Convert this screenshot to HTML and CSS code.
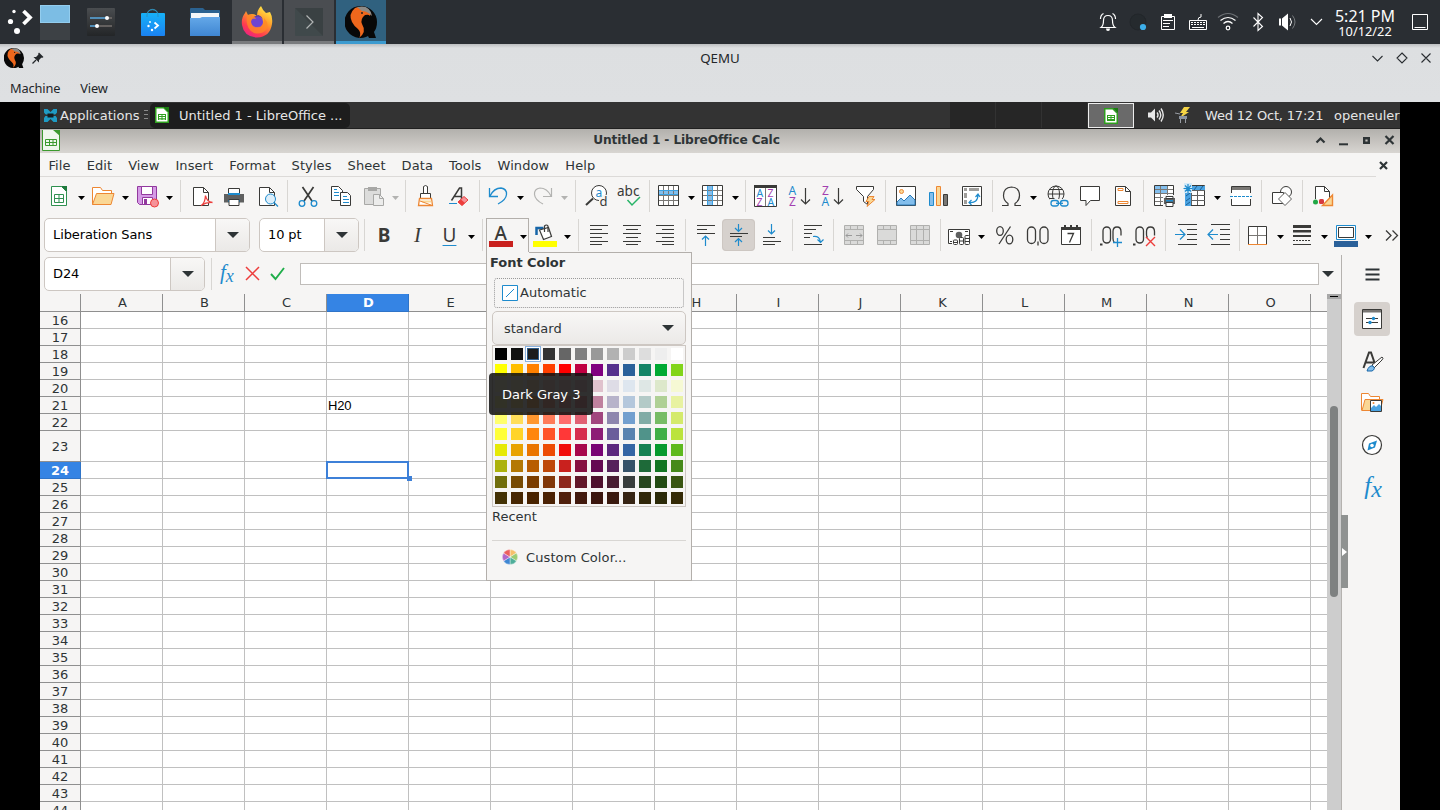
FILE: index.html
```html
<!DOCTYPE html>
<html lang="en">
<head>
<meta charset="utf-8">
<title>QEMU</title>
<link rel="stylesheet" href="styles.css">
</head>
<body>
<div class="screen">

<header class="panel">
  <div class="launcher"><svg width="40" height="44"><g fill="#fff"><circle cx="14" cy="11.500" r="1.700"/><circle cx="10.500" cy="21.500" r="2.600"/><circle cx="17" cy="31" r="3"/></g><path d="M23.500 11l6.500 6.500-6.500 6.500" fill="none" stroke="#fff" stroke-width="3.800"/></svg></div>
  <div class="pager"><i></i><i></i></div>
  <div class="launch"><svg width="28" height="28"><defs><linearGradient id="gs" x1="0" y1="0" x2="0" y2="1"><stop offset="0" stop-color="#4a4d50"/><stop offset="1" stop-color="#232527"/></linearGradient></defs><rect width="28" height="28" rx="1" fill="url(#gs)"/><path d="M3 10h17M3 18h6" stroke="#5aa9e0" stroke-width="1.500"/><path d="M21 10h4M11 18h14" stroke="#75706e" stroke-width="1.500"/><circle cx="20" cy="10" r="2" fill="#fff"/><circle cx="10" cy="18" r="2" fill="#fff"/></svg></div>
  <div class="launch"><svg width="28" height="28"><defs><linearGradient id="gd" x1="0" y1="0" x2="0" y2="1"><stop offset="0" stop-color="#16b1f7"/><stop offset="1" stop-color="#1b82f2"/></linearGradient></defs><path d="M8 10V7a5.500 5.500 0 0 1 11 0v3" fill="none" stroke="#3f6f7c" stroke-width="1.300"/><rect x="2" y="5" width="24" height="23" rx="1" fill="url(#gd)"/><path d="M8 9V7a5.500 5.500 0 0 1 11 0v2" fill="none" stroke="#2b8fc0"/><g fill="#fff"><circle cx="11" cy="14" r=".9"/><circle cx="9.500" cy="18" r="1.200"/><circle cx="13" cy="22" r="1.200"/></g><path d="M15.500 14.500l3.500 3-3.500 3" fill="none" stroke="#fff" stroke-width="1.800"/></svg></div>
  <div class="launch"><svg width="30" height="28"><defs><linearGradient id="gf" x1="0" y1="0" x2="0" y2="1"><stop offset="0" stop-color="#64a8e8"/><stop offset="1" stop-color="#3f86d2"/></linearGradient></defs><path d="M0 1q0-1 1-1h12l2 2h14q1 0 1 1v9H0z" fill="#2b6290"/><path d="M1 5h28v5H1z" fill="#f4f7f9"/><path d="M0 10h10l2-1h18v19H0z" fill="url(#gf)"/></svg></div>
  <div class="task"><svg width="32" height="32"><defs><linearGradient id="ff" x1=".8" y1="0" x2=".2" y2="1"><stop offset="0" stop-color="#fff04a"/><stop offset=".4" stop-color="#ff9a2a"/><stop offset=".75" stop-color="#ff3a50"/><stop offset="1" stop-color="#e8208c"/></linearGradient></defs><path d="M20 0q2 5 5 7l4-1q3 5 2 12-2 13-15 13.500Q3 31 1 19q-1-7 3-12l1-2 2 4q2-1 4-1 3 0 5 2 0-6 4-10z" fill="url(#ff)"/><circle cx="16" cy="16" r="6" fill="#6e44d0"/><path d="M6 9q7-1 9 4-5-1-5 3 1 5 6 5 8 0 7-9 6 6 2 12-5 5-12 3Q4 23 6 9z" fill="#ff8a24" opacity=".75"/><path d="M13 11q7-2 9 3-1-4-5-5z" fill="#4c36a8"/></svg></div>
  <div class="task"><svg width="28" height="28"><rect width="28" height="28" rx="1" fill="#40494b"/><path d="M0 0l28 28V0z" fill="#3a4143"/><path d="M11.500 7.500l6.500 6.500-6.500 6.500" fill="none" stroke="#b2b5b5" stroke-width="1.200"/></svg></div>
  <div class="task active"><svg width="32" height="32" viewBox="0 0 32 32"><g id="qemu"><path d="M16 0a16 16 0 1 0 5 31l2-1 1 2h7l-2-6q3-4 3-10A16 16 0 0 0 16 0z" fill="#080808"/><path d="M10 2Q3 8 7 16q2 4 6 7 4 4 1 9 8-6 3-14-2-5 3-9 4-1 5 1 2-5-5-8-6-2-10 0z" fill="#ee671c"/><path d="M12 1q13-3 15 9-5-5-10-5z" fill="#8d8a86"/><circle cx="17" cy="7" r="1" fill="#222"/></g></svg></div>
  <div class="tray">
    <svg width="30" height="30"><g fill="none" stroke="#fff" stroke-width="1.200"><path d="M8 20.500q2.500-2 2.500-7 0-5 4.500-5t4.500 5q0 5 2.500 7zM7.500 12q0-4 3-5.500M22.500 12q0-4-3-5.500"/></g><path d="M13 21.500h4q0 2.500-2 2.500t-2-2.500z" fill="#fff"/></svg>
    <svg width="30" height="30"><circle cx="15" cy="15" r="8" fill="#252a2e" stroke="#22262a"/><circle cx="20" cy="20" r="3.100" fill="#3daee9"/></svg>
    <svg width="30" height="30"><path d="M8.500 9.500h13v13h-13z" fill="none" stroke="#fff"/><path d="M11 7h8v4h-8zM10 13h10v1H10zM10 16h7v1h-7zM10 19h6v1h-6z" fill="#fff"/></svg>
    <svg width="30" height="30"><path d="M6.500 13.500h17v9h-17zM15 13q0-3 3-3V7" fill="none" stroke="#fff"/><path d="M8 15.500h14M8 17.500h14" stroke="#fff" stroke-dasharray="2 1"/><path d="M9 20.500h12" stroke="#fff"/></svg>
    <svg width="30" height="30"><g fill="none" stroke="#fff" stroke-width="1.200"><circle cx="15" cy="21" r="1.800"/><path d="M10.500 16.500q4.500-4 9 0M7.500 13.500q7.500-6 15 0"/><path d="M5 10.500q10-8 20 0" stroke="#6c7074"/></g></svg>
    <svg width="30" height="30"><path d="M10.500 10.500l9 9-4.500 4v-17l4.500 4-9 9" fill="none" stroke="#fff" stroke-width="1.100"/></svg>
    <svg width="30" height="30"><path d="M6 11.500h2v7H6zM9 11.500l6-5v17l-6-5z" fill="#fff"/><path d="M17 11q3 4 0 8" fill="none" stroke="#fff"/><path d="M19.500 8.500q5 6.500 0 13" fill="none" stroke="#777b7e"/></svg>
    <svg width="30" height="30"><path d="M8 12l5.500 5.500 5.500-5.500" fill="none" stroke="#fff" stroke-width="1.100"/></svg>
  </div>
  <div class="clock"><b>5:21 PM</b><span>10/12/22</span></div>
  <svg class="desk" width="16" height="16"><path d="M.5.5h15v15H.5z" fill="none" stroke="#fff"/><path d="M2.500 13.500h11" stroke="#fff"/></svg>
</header>

<section class="qemu-head">
  <div class="qtitle">
    <svg class="qicon" width="20" height="20" viewBox="0 0 32 32"><use href="#qemu"/></svg>
    <svg width="12" height="12"><path d="M7 .5L11.500 5 10 6 9.500 5.500 7 8v2.500L1.500 5H4l2.500-2.500L6 2z" fill="#24282b"/><path d="M4 8L.5 11.500" stroke="#24282b" stroke-width="1.200"/></svg>
    <h1>QEMU</h1>
    <svg class="qctl" width="60" height="14"><g fill="none" stroke="#2a2e32" stroke-width="1.100"><path d="M1.500 5l5 5 5-5M31 2l5 5-5 5-5-5zM50.500 2.500l9 9M59.500 2.500l-9 9"/></g></svg>
  </div>
  <nav class="qmenu"><span>Machine</span><span>View</span></nav>
</section>

<main class="guest">
  <div class="xpanel">
    <svg width="15" height="15"><path d="M1 1h3.500l3 3 3-3H14v3.500L12 7l2 3v4h-3.500l-3-3-3 3H1v-4l2-3-2-2.500z" fill="#1f9bc4"/><path d="M0 6.500h15v1.500H0z" fill="#333"/><path d="M4.500 5.500h6v4h-6z" fill="#141c20"/></svg>
    <span class="apps">Applications</span>
    <i class="grip"></i>
    <div class="xtask"><svg width="14" height="16"><path d="M0 0h9l5 5v11H0z" fill="#2ea01e"/><path d="M1.500 1.500h7l4 4v9h-11z" fill="#fff"/><path d="M9 0h5v5z" fill="#197c10"/><path d="M3 7h8v6H3z" fill="#2ea01e"/><path d="M4 8h2.500v1H4zM7.500 8H10v1H7.500zM4 10h2.500v1H4zM7.500 10H10v1H7.500zM4 11.800h2.500v.6H4zM7.500 11.800H10v.6H7.500z" fill="#fff"/></svg><span>Untitled 1 - LibreOffice ...</span></div>
    <div class="spaces"><i></i><i></i><i></i><i class="on"><svg width="14" height="16"><path d="M0 0h9l5 5v11H0z" fill="#2ea01e"/><path d="M1.500 1.500h7l4 4v9h-11z" fill="#fff"/><path d="M9 0h5v5z" fill="#197c10"/><path d="M3 7h8v6H3z" fill="#2ea01e"/><path d="M4 8h2.500v1H4zM7.500 8H10v1H7.500zM4 10h2.500v1H4zM7.500 10H10v1H7.500z" fill="#fff"/></svg></i></div>
    <svg class="vol" width="16" height="14"><path d="M0 4.500h3l4-4v13l-4-4H0z" fill="#e8e8e8"/><path d="M9 4.500q2 2.500 0 5M11 2.500q3.500 4.500 0 9M13 .5q4.500 6.500 0 13" fill="none" stroke="#e8e8e8" stroke-width="1.400"/></svg>
    <svg class="pwr" width="16" height="16"><path d="M9 0h6l-4 5h3L5 11l3-5H5z" fill="#f5d445"/><path d="M4 9h8v3H4z" fill="#8b93a0"/><path d="M5.500 12v4M10.500 12v4M0 6l5 1" stroke="#9a9ea5"/></svg>
    <span class="date">Wed 12 Oct, 17:21</span><span class="user">openeuler</span>
  </div>

  <div class="wtitle">
    <svg width="18" height="22"><path d="M.5 0v20.500h17V0" fill="#eef7ec" stroke="#3b9a2e"/><path d="M11 0h7v6z" fill="#3b9a2e"/><path d="M3.500 9.500h11v6h-11zM3.500 12.500h11M7.500 9.500v6M11 9.500v6" fill="none" stroke="#3b9a2e"/></svg>
    <h2>Untitled 1 - LibreOffice Calc</h2>
    <svg class="wctl" width="80" height="16"><g fill="none" stroke="#2e3436" stroke-width="2.200"><path d="M1.500 9.500l4-4 4 4"/><path d="M24 11.300h9" stroke-width="2"/><path d="M49.200 5.200h4.600v4.600h-4.600z" stroke-width="2.400"/><path d="M70.500 3l8 8M78.500 3l-8 8"/></g></svg>
  </div>

  <nav class="menu"><span>File</span><span>Edit</span><span>View</span><span>Insert</span><span>Format</span><span>Styles</span><span>Sheet</span><span>Data</span><span>Tools</span><span>Window</span><span>Help</span>
    <svg width="9" height="9"><path d="M1 1l7 7M8 1L1 8" stroke="#2e3436" stroke-width="2.200"/></svg></nav>

  <div class="bar bar1">
    <svg class="b"><path d="M8.500 6.500h10l5 5v14h-15z" fill="#fff" stroke="#2f9150"/><path d="M18 6h6v6z" fill="#1f7a3c"/><path d="M11.500 14.500h9v8h-9zM11.500 18.500h9M16 14.500v8" fill="none" stroke="#2f9150"/></svg><i class="d"></i>
    <svg class="b"><path d="M5.500 24.500v-17h8l2 3h9v3" fill="#fff" stroke="#ed8733"/><path d="M9.500 13.500h17.500l-3 11H5.500z" fill="#fad795" stroke="#ed8733"/></svg><i class="d"></i>
    <svg class="b"><path d="M6.500 6.500h19v18h-17l-2-2z" fill="#d59be6" stroke="#92399e"/><path d="M10.500 6.500h11v8h-11z" fill="#fff" stroke="#92399e"/><path d="M11.500 17.500h10v7h-10z" fill="#fff" stroke="#92399e"/><path d="M13 19h3v5h-3z" fill="#92399e"/><circle cx="23.500" cy="23" r="4" fill="#f59399" stroke="#ed3d3b"/></svg><i class="d"></i>
    <i class="s g1"></i>
    <svg class="b"><path d="M9.500 7.500h10l5 5v13h-15z" fill="#fff" stroke="#3a3a38"/><path d="M19.500 7.500v5h5" fill="none" stroke="#3a3a38"/><path d="M17 25.500q4-2 4.500-10 1 6 7 7-6-.5-11.500 3z" fill="#f6f5f4" stroke="#ed3d3b" stroke-width="1.300"/></svg>
    <svg class="b"><path d="M7 14h20v8.500H7z" fill="#5f6060"/><path d="M11.500 8.500h11v5h-11z" fill="#fff" stroke="#3a3a38"/><path d="M11 13h12v2H11zM11 20h12v2H11z" fill="#1e8bcd"/><path d="M12 19.500h10v6H12z" fill="#fff" stroke="#3a3a38"/></svg>
    <svg class="b"><path d="M9.500 7.500h10l5 5v13h-15z" fill="#fff" stroke="#3a3a38"/><path d="M19.500 7.500v5h5" fill="none" stroke="#3a3a38"/><circle cx="20.500" cy="19" r="5" fill="#dceefa" stroke="#1e8bcd"/><path d="M24 22.500l4 4" stroke="#1e8bcd" stroke-width="1.300"/></svg>
    <i class="s"></i>
    <svg class="b"><path d="M11.500 7l9.500 14M22.500 7L13 21" stroke="#3a3a38" stroke-width="1.700"/><circle cx="11" cy="23.500" r="2.800" fill="none" stroke="#1e8bcd" stroke-width="1.300"/><circle cx="23" cy="23.500" r="2.800" fill="none" stroke="#1e8bcd" stroke-width="1.300"/></svg>
    <svg class="b"><path d="M7.500 6.500h7l4 4v10h-11z" fill="#fff" stroke="#3a3a38"/><path d="M10 12.500h5M10 15.500h5M10 9.500h3" stroke="#1e8bcd"/><path d="M16.500 12.500h7l3 3v10h-10z" fill="#fff" stroke="#3a3a38"/><path d="M19 16.500h4M19 19.500h6M19 22.500h6" stroke="#1e8bcd"/></svg>
    <svg class="b"><path d="M7.500 8.500h16v16h-16z" fill="#dcdcdb" stroke="#a8a8a6"/><path d="M11 7h9v4h-9z" fill="#a8a8a6"/><path d="M16.500 14.500h6l4 4v7h-10z" fill="#ececeb" stroke="#a8a8a6"/><path d="M22.500 14.500v4h4" fill="none" stroke="#a8a8a6"/></svg><i class="d off"></i>
    <i class="s"></i>
    <svg class="b"><path d="M14.500 13V6.500q2-2 4 0V13M11.500 18.500v-5h10v5z" fill="#fff" stroke="#3a3a38"/><path d="M10.500 18.500h12l1 7h-14z" fill="#fff" stroke="#ed8733" stroke-width="1.300"/><path d="M11 20.500h11l.5 2-9 0z" fill="#fad795"/><path d="M11 21l11 4" stroke="#ed8733"/></svg>
    <svg class="b"><path d="M9.500 20.500L17.500 8h2v12M12.500 16.500h7" fill="none" stroke="#3a3a38" stroke-width="1.500"/><path d="M7 23.500h8" stroke="#1e8bcd"/><path d="M16 22l6-5.500 4 3.500-6 5.500z" fill="#f59399" stroke="#ed3d3b"/><path d="M16 22l3-2.500 4 3.500-3 2.500z" fill="#ed3d3b"/></svg>
    <i class="s"></i>
    <svg class="b m1"><path d="M7.500 8v8.500H16M8 16q4-8 11-8 6 1 5.500 6.500T16 24" fill="none" stroke="#1e8bcd" stroke-width="1.300"/></svg><i class="d"></i>
    <svg class="b"><path d="M25.500 8v8.500H17M25 16q-4-8-11-8-6 1-5.500 6.500T17 24" fill="none" stroke="#b3b3b1" stroke-width="1.200"/></svg><i class="d off"></i>
    <i class="s g1"></i>
    <svg class="b"><circle cx="20" cy="13" r="7.500" fill="#fff" stroke="#3a3a38"/><path d="M14 18.500L7 25" stroke="#3a3a38" stroke-width="2"/><path d="M20 15h9v12h-9z" fill="#f6f5f4"/><text x="16.500" y="17" fill="#1e8bcd" font-size="12">a</text><text x="20.500" y="26" fill="#3a3a38" font-size="13">d</text></svg>
    <svg class="b"><text x="5" y="16" fill="#3a3a38" font-size="13.500">abc</text><path d="M15.500 20l4.500 5 8-8" fill="none" stroke="#27b467" stroke-width="1.500"/></svg>
    <i class="s"></i>
    <svg class="b"><path d="M5.500 5.500h20v20h-20z" fill="#fff"/><path d="M5 10h20v5H5z" fill="#83beec"/><path d="M5 10.500h20M5 15.500h20M5 20.500h20M10.500 5v20M15.500 5v20M20.500 5v20" stroke="#797774"/><path d="M5 10.500h20M5 14.500h20" stroke="#3ba0e0"/><path d="M5.500 5.500h20v20h-20z" fill="none" stroke="#3a3a38"/></svg><i class="d"></i>
    <svg class="b"><path d="M5.500 5.500h20v20h-20z" fill="#fff"/><path d="M10 5h5v20h-5z" fill="#83beec"/><path d="M5 10.500h20M5 15.500h20M5 20.500h20M20.500 5v20" stroke="#797774"/><path d="M10.500 5v20M15.500 5v20" stroke="#3ba0e0"/><path d="M5.500 5.500h20v20h-20z" fill="none" stroke="#3a3a38"/></svg><i class="d"></i>
    <i class="s"></i>
    <svg class="b"><path d="M5.500 5.500h22v21h-22z" fill="#fff" stroke="#3a3a38"/><path d="M5 5h23v3H5z" fill="#3a3a38"/><path d="M16.500 8v18" stroke="#797774"/><g font-size="10.500"><text x="7.500" y="17" fill="#1e8bcd">A</text><text x="18.500" y="17" fill="#a33fb0">Z</text><text x="7.500" y="25.500" fill="#a33fb0">Z</text><text x="18.500" y="25.500" fill="#1e8bcd">A</text></g></svg>
    <svg class="b"><g font-size="12"><text x="6.500" y="14.500" fill="#1e8bcd">A</text><text x="7" y="26" fill="#a33fb0">Z</text></g><path d="M23.500 8v16M19 19.500l4.500 4.500 4.500-4.500" fill="none" stroke="#3a3a38" stroke-width="1.200"/></svg>
    <svg class="b"><g font-size="12"><text x="7" y="14.500" fill="#a33fb0">Z</text><text x="6.500" y="26" fill="#1e8bcd">A</text></g><path d="M23.500 8v16M19 19.500l4.500 4.500 4.500-4.500" fill="none" stroke="#3a3a38" stroke-width="1.200"/></svg>
    <svg class="b"><path d="M8.500 6.500h17v3l-6 7v8l-4-3v-5l-7-7z" fill="#fff" stroke="#3a3a38"/><path d="M21 16.500h5l-2 3h3l-8 7 2-5h-3z" fill="#fad795" stroke="#ed8733"/></svg>
    <i class="s"></i>
    <svg class="b"><path d="M7.500 6.500h19v19h-19z" fill="#fff" stroke="#3a3a38"/><circle cx="12.500" cy="11.500" r="2" fill="#fad795" stroke="#ed8733"/><path d="M8 25v-3l4-4 3 3 6-6 5 5v5z" fill="#83beec" stroke="#2b7ab8"/></svg>
    <svg class="b"><path d="M7.500 12.500h4v13h-4z" fill="#83beec" stroke="#1e8bcd"/><path d="M14.500 6.500h4v19h-4z" fill="#fad795" stroke="#ed8733"/><path d="M21.500 14.500h4v11h-4z" fill="#797774" stroke="#3a3a38"/></svg>
    <svg class="b"><path d="M7.500 6.500h19v19h-19z" fill="#fff" stroke="#3a3a38"/><path d="M9 8h3v3H9zM9 13h3v5H9zM9 20h3v4H9zM14 8h10v3H14z" fill="#a09e9b"/><path d="M14 22.500q9 1 9-8M16.500 20L14 22.500l2.500 2.500M20.500 17l2.500-3 2 3" fill="none" stroke="#1e8bcd" stroke-width="1.200"/></svg>
    <i class="s"></i>
    <svg class="b m1"><path d="M7 25.500h6v-2q-4.500-3-4.500-8 0-8 8-8.500 8 .5 8 8.500 0 5-4.500 8v2h6" fill="none" stroke="#3a3a38" stroke-width="1.200"/></svg><i class="d"></i>
    <svg class="b"><g fill="none" stroke="#3a3a38"><circle cx="17" cy="14" r="8"/><ellipse cx="17" cy="14" rx="3.500" ry="8"/><path d="M9 14h16M10.500 9.500h13M10.500 18.500h5"/></g><path d="M11 19h18v9H11z" fill="#f6f5f4"/><g fill="none" stroke="#1e8bcd" stroke-width="1.300"><rect x="12" y="20.500" width="7.500" height="5.500" rx="2.500"/><rect x="21.500" y="20.500" width="7.500" height="5.500" rx="2.500"/><path d="M17 23.300h7"/></g></svg>
    <svg class="b"><path d="M8.500 6.500h19v14h-9l-4.500 5v-5H8.500z" fill="#fff" stroke="#3a3a38"/></svg>
    <svg class="b"><path d="M10.500 6.500h10l5 5v14h-15z" fill="#fff" stroke="#3a3a38"/><path d="M20.500 6.500v5h5" fill="none" stroke="#3a3a38"/><path d="M13 8.500h5v2h-5zM13 21.500h10v2H13z" fill="#fff" stroke="#ed8733"/></svg>
    <i class="s g1"></i>
    <svg class="b"><path d="M7.500 5.500h19v20h-19z" fill="#fff" stroke="#3a3a38"/><path d="M8 6h12v8H8z" fill="#83beec"/><path d="M8 9.500h18M8 13.500h18M8 17.500h18M8 21.500h10M13.500 6v19M20.500 6v12" stroke="#797774"/><path d="M16 15h12v12H16z" fill="#f6f5f4"/><path d="M17 18h11v6H17z" fill="#5f6060"/><path d="M19 16.500h7v2h-7zM19 22.500h7v4h-7z" fill="#fff" stroke="#3a3a38"/><path d="M19 20h7v1.500h-7z" fill="#1e8bcd"/></svg>
    <svg class="b m1"><path d="M6.500 5.500h19v20h-19z" fill="#fff" stroke="#3a3a38"/><path d="M6 6h6v20H6zM6 6h20v5H6z" fill="#4aa3e2"/><path d="M12 10.500h14M12 15.500h14M12 20.500h14M18.500 10v15M12.500 10v15" stroke="#5f6060"/><path d="M7 16l4-3M7 21l4-3M7 25l4-3M15 10l3-4M21 10l3-4" stroke="#1d5f94"/><path d="M5 3h8v10H5z" fill="#d5eaf8"/><path d="M9 4v9M4.500 8.500h9M6 5.500l6 6M12 5.500l-6 6" stroke="#1e8bcd" stroke-width="1.200"/></svg><i class="d"></i>
    <svg class="b"><path d="M8.500 6.500h19v19h-19z" fill="#fff"/><path d="M8.500 13V6.500h19V13M8.500 19v6.500h19V19" fill="none" stroke="#3a3a38"/><path d="M9 7h18v3H9z" fill="#797774"/><path d="M7 16.500h22" stroke="#1e8bcd" stroke-dasharray="3 1"/></svg>
    <i class="s g1"></i>
    <svg class="b"><circle cx="21" cy="12" r="5.500" fill="#fff" stroke="#3a3a38"/><path d="M7.500 12.500h11v11h-11z" fill="#fff" stroke="#3a3a38"/><path d="M20 12.500l6.500 6.500-6.500 6.500-6.500-6.500z" fill="#fff" stroke="#5f5f5d"/></svg>
    <i class="s"></i>
    <svg class="b"><path d="M9.500 6.500h9l5 5v14h-14z" fill="#fff" stroke="#3a3a38"/><path d="M18.500 6.500v5h5" fill="none" stroke="#3a3a38"/><path d="M6 19h10v8H6z" fill="#f6f5f4"/><circle cx="9.500" cy="22" r="2.500" fill="#22a745"/><rect x="13" y="19" width="5" height="5" rx="1.500" fill="#d63a3f"/><path d="M26.500 15v10.500h-10z" fill="#fad795" stroke="#ed8733" stroke-width="1.400"/></svg>
  </div>

  <div class="bar bar2">
    <div class="combo font"><span>Liberation Sans</span><i></i></div>
    <div class="combo size"><span>10 pt</span><i></i></div>
    <i class="s"></i>
    <span class="b t bold">B</span><span class="b t ital">I</span><span class="b t und m1">U</span><i class="d"></i>
    <i class="s g1"></i>
    <div class="open m1"><svg class="b"><text x="9.500" y="21" fill="#3a3a38" font-size="19" font-weight="500">A</text><path d="M4 22h24v6H4z" fill="#c9211e"/></svg><i class="d"></i></div>
    <svg class="b"><path d="M4 22h24v6H4z" fill="#ffff00"/><path d="M7.500 16V9h7" fill="none" stroke="#1766a8" stroke-width="2.500"/><path d="M10.500 11l9-2.500 3 9-8 3z" fill="#fff" stroke="#3a3a38" stroke-width="1.200"/><path d="M15.500 13V7q2-2 3.500 0v6" fill="none" stroke="#3a3a38" stroke-width="1.200"/></svg><i class="d"></i>
    <i class="s g1"></i>
    <svg class="b"><path class="k" d="M8 6.500h18M8 10.500h12M8 14.500h18M8 18.500h12M8 22.500h18M8 25.500h12"/></svg>
    <svg class="b"><path class="k" d="M8 6.500h18M11 10.500h12M8 14.500h18M11 18.500h12M8 22.500h18M11 25.500h12"/></svg>
    <svg class="b"><path class="k" d="M8 6.500h18M14 10.500h12M8 14.500h18M14 18.500h12M8 22.500h18M14 25.500h12"/></svg>
    <i class="s"></i>
    <svg class="b"><path class="k" d="M8 6.500h18M8 10.500h10M8 14.500h18"/><path class="u" d="M16.500 27V17M13 20.500l3.500-3.500 3.500 3.500"/></svg>
    <svg class="b pressed"><path class="k" d="M8 14.500h18M8 17.500h12"/><path class="u" d="M16.500 5v7M13 9l3.500 3.500L20 9M16.500 27v-7M13 23l3.500-3.500L20 23"/></svg>
    <svg class="b"><path class="k" d="M8 18.500h12M8 22.500h18M8 25.500h12"/><path class="u" d="M16.500 5v10M13 11.500l3.500 3.500 3.500-3.500"/></svg>
    <i class="s"></i>
    <svg class="b"><path class="k" d="M8 6.500h18M8 10.500h12M8 14.500h8M8 18.500h6M8 25.500h18"/><path class="u" d="M17 17.500q7-1 7.500 6M21.500 20.500l3 3 3-3"/></svg>
    <i class="s"></i>
    <svg class="b"><path d="M7.500 6.500h19v19h-19z" fill="#dadad9" stroke="#b0b0ae"/><path d="M7 10.500h20M7 21.500h20M13.500 6v4M20.500 6v4M13.500 22v4M20.500 22v4" stroke="#b0b0ae"/><path d="M9 16.500h6M19 16.500h6M11 14.500l-2 2 2 2M23 14.500l2 2-2 2" fill="none" stroke="#999"/></svg>
    <svg class="b"><path d="M7.500 6.500h19v19h-19z" fill="#dadad9" stroke="#b0b0ae"/><path d="M7 10.500h20M7 21.500h20M13.500 6v4M20.500 6v4M13.500 22v4M20.500 22v4" stroke="#b0b0ae"/></svg>
    <svg class="b"><path d="M7.500 6.500h19v19h-19z" fill="#dadad9" stroke="#b0b0ae"/><path d="M7 10.500h20M7 21.500h20M13.500 6v20M20.500 6v20" stroke="#b0b0ae"/></svg>
    <i class="s"></i>
    <svg class="b m1"><path d="M5.500 10.500h21v14h-21z" fill="#fff" stroke="#3a3a38"/><path d="M7 12.500h3M22 12.500h3M7 22.500h2" stroke="#3a3a38"/><circle cx="16" cy="16" r="3.300" fill="#5f6060"/><path d="M9 20h18v8H9z" fill="#f6f5f4"/><g fill="#fff" stroke="#3a3a38"><rect x="10.500" y="21" width="4" height="4.500" rx="1"/><rect x="16.500" y="18.500" width="4" height="7" rx="1"/><rect x="22" y="16.500" width="4.500" height="9" rx="1"/><path d="M16.500 22h4M22 19.500h4.500M22 22.500h4.500M10.500 23.500h4"/></g></svg><i class="d"></i>
    <svg class="b g1"><g fill="none" stroke="#3a3a38" stroke-width="1.300"><ellipse cx="12" cy="12" rx="3.300" ry="4.300"/><ellipse cx="21.500" cy="20.500" rx="3.300" ry="4.300"/><path d="M22.500 7.500L11 25"/></g></svg>
    <svg class="b"><g fill="none" stroke="#3a3a38" stroke-width="1.300"><rect x="6.500" y="8" width="8" height="16.500" rx="4"/><rect x="19" y="8" width="8" height="16.500" rx="4"/><path d="M17 22.500v4"/></g></svg>
    <svg class="b"><path d="M7.500 8.500h19v17h-19z" fill="#fff" stroke="#3a3a38"/><path d="M7 8h20v3H7zM10 6h2v3h-2zM16 6h2v3h-2zM22 6h2v3h-2z" fill="#3a3a38"/><path d="M13.500 14.500h6l-4 9" fill="none" stroke="#3a3a38" stroke-width="1.300"/></svg>
    <i class="s"></i>
    <svg class="b"><g fill="none" stroke="#3a3a38" stroke-width="1.300"><path d="M5 25.500h2.500" stroke-width="2"/><rect x="8" y="8" width="7.500" height="16" rx="3.700"/><path d="M19.500 23.500q-1.500-1-1.500-4v-7q0-4.500 4-4.500t4 4.500v4"/></g><path d="M22.500 19v9M18 23.500h9" stroke="#1e8bcd" stroke-width="1.300"/></svg>
    <svg class="b"><g fill="none" stroke="#3a3a38" stroke-width="1.300"><path d="M5 25.500h2.500" stroke-width="2"/><rect x="8" y="8" width="7.500" height="16" rx="3.700"/><path d="M19.500 18.500q-1-1-1-3v-3q0-4.500 4-4.500t4 4.500v4"/></g><path d="M18 18l9 9M27 18l-9 9" stroke="#ed3d3b" stroke-width="1.400"/></svg>
    <i class="s"></i>
    <svg class="b"><path class="k" d="M9 5.500h19M18 10.500h10M18 15.500h10M18 20.500h10M9 25.500h19"/><path class="u" d="M6 15.500h10M11 10.500l5 5-5 5"/></svg>
    <svg class="b"><path class="k" d="M9 5.500h19M18 10.500h10M18 15.500h10M18 20.500h10M9 25.500h19"/><path class="u" d="M16 15.500H6M11 10.500l-5 5 5 5"/></svg>
    <i class="s"></i>
    <svg class="b m1"><path d="M6.500 7.500h18v18h-18z" fill="#fff" stroke="#3a3a38"/><path d="M15.500 8v17M7 16.500h17" stroke="#797774"/><path d="M6 25.500h19" stroke="#ed8733"/></svg><i class="d"></i>
    <svg class="b"><path d="M7 6h18v3H7zM7 11h18v2.500H7zM7 16h18v2H7z" fill="#3a3a38"/><path d="M7 21.500h18" stroke="#3a3a38" stroke-dasharray="2 1"/><path d="M7 25.500h18" stroke="#3a3a38"/></svg><i class="d"></i>
    <svg class="b"><path d="M4 22h24v6H4z" fill="#2a6099"/><path d="M6.500 6.500h19v14h-19z" fill="#fff" stroke="#1e8bcd"/><path d="M8.500 8.500h15v10h-15z" fill="none" stroke="#3a3a38"/></svg><i class="d"></i>
    <svg class="b more"><path d="M12 11.500l5 5-5 5M18.500 11.500l5 5-5 5" fill="none" stroke="#3a3a38" stroke-width="1.300"/></svg>
  </div>

  <div class="lower">
    <div class="doc">
      <div class="formula">
        <div class="combo name"><span>D24</span><i></i></div>
        <i class="s"></i>
        <span class="fx">f<sub>x</sub></span>
        <svg width="15" height="15"><path d="M1 1l13 13M14 1L1 14" stroke="#ed3d3b" stroke-width="1.500"/></svg>
        <svg class="ok" width="15" height="15"><path d="M1 8l4.500 5L14 2" fill="none" stroke="#1fae4a" stroke-width="1.900"/></svg>
        <div class="input"></div>
        <i class="drop"></i>
      </div>
      <div class="gridwrap">
        <div class="sheet" id="sheet"></div>
        <div class="scroll"><i class="split"></i><i class="thumb"></i></div>
      </div>
    </div>
    <aside class="side">
      <svg width="33" height="33"><path d="M9.500 11.500h14M9.500 16.500h14M9.500 21.500h14" stroke="#2e3436" stroke-width="2"/></svg>
      <svg class="sel" width="36" height="34"><path d="M8.500 7.500h19v19h-19z" fill="#fff" stroke="#3a3a38"/><path d="M9 8h18v2.500H9z" fill="#797774"/><path d="M12 16.500h12M12 20.500h12" stroke="#3a3a38"/><circle cx="19.500" cy="16.500" r="1.700" fill="#1e8bcd"/><circle cx="16" cy="20.500" r="1.700" fill="#1e8bcd"/></svg>
      <svg width="36" height="34"><path d="M9.500 24l5.500-15.500h2L21 20M11.500 18.500h8" fill="none" stroke="#3a3a38" stroke-width="2"/><path d="M18 21l10-8q2 1 0 3l-8 8z" fill="#fff" stroke="#3a3a38"/><path d="M13 27q2-6 6-5 3 3-1 5z" fill="#83beec" stroke="#1766a8"/></svg>
      <svg width="36" height="34"><path d="M7.500 24.500v-17h7l2 3h9v3" fill="#fff" stroke="#ed8733"/><path d="M11 13.500h18l-3 11H8z" fill="#fad795" stroke="#ed8733"/><path d="M16.500 14.500h11v11h-11z" fill="#fff" stroke="#3a3a38"/><path d="M17 25v-3l3-3 2 2 3-3 2 2v5z" fill="#4aa3e2"/><circle cx="19.500" cy="17" r="1" fill="#ed8733"/></svg>
      <svg width="36" height="34"><circle cx="18" cy="17" r="9.500" fill="#fff" stroke="#3a3a38" stroke-width="1.200"/><path d="M23 12.500l-2 7-7.500 3 1.500-7z" fill="#1e8bcd"/><circle cx="18" cy="17.500" r="1.800" fill="#fff"/></svg>
      <span class="fx big">f<sub>x</sub></span>
      <svg class="handle" width="7" height="73"><path d="M0 0h7v73H0z" fill="#8f9291"/><path d="M1 33l5 4-5 4z" fill="#fff"/></svg>
    </aside>
  </div>

  <div class="popup">
    <h3>Font Color</h3>
    <div class="auto"><svg width="16" height="16"><path d="M.5.5h15v15H.5z" fill="#fff" stroke="#1e8bcd"/><path d="M4 12l8-8" stroke="#1e8bcd"/></svg><span>Automatic</span></div>
    <div class="palette-name"><span>standard</span><i></i></div>
    <div class="swatches" id="swatches"></div>
    <div class="recent">Recent</div>
    <div class="custom"><svg width="16" height="16"><g stroke="#fff" stroke-width=".4"><path d="M8 8V.5A7.500 7.500 0 0 1 14.500 4z" fill="#f6c06a"/><path d="M8 8l6.500-4a7.500 7.500 0 0 1 0 8z" fill="#9ccc73"/><path d="M8 8l6.500 4A7.500 7.500 0 0 1 8 15.500z" fill="#4fae9a"/><path d="M8 8v7.500A7.500 7.500 0 0 1 1.500 12z" fill="#3f86d2"/><path d="M8 8l-6.500 4a7.500 7.500 0 0 1 0-8z" fill="#b367c8"/><path d="M8 8L1.500 4A7.500 7.500 0 0 1 8 .5z" fill="#ec5f5f"/></g></svg><span>Custom Color...</span></div>
  </div>
  <div class="tip">Dark Gray 3</div>
</main>
</div>
<script src="app.js"></script>
</body>
</html>
```

FILE: styles.css
```css
*, *::before, *::after { box-sizing: border-box; }
body { margin: 0; }
h1, h2, h3 { margin: 0; font-weight: normal; }
svg { display: block; flex: none; }
i { flex: none; font-style: normal; }
.screen { width: 1440px; height: 810px; overflow: hidden; background: #000; font-family: "Noto Sans", sans-serif; display: flex; flex-direction: column; }

.panel { height: 44px; flex: none; background: #2a2e33; display: flex; align-items: center; color: #fcfcfc; }
.launcher { width: 40px; }
.pager { width: 30px; height: 35px; margin-right: 5px; }
.pager i { display: block; height: 17px; background: #3d4145; }
.pager i:first-child { background: #7cbde4; border: 1px solid #93cdee; height: 18px; }
.launch { width: 52px; display: flex; justify-content: center; }
.task { width: 50px; height: 44px; margin-left: 2px; background: #4a4d51; border-bottom: 3px solid #797b7e; display: flex; align-items: center; justify-content: center; }
.launch + .task { margin-left: 1px; }
.task.active { background: #30617f; border-color: #3c9bd0; }
.task svg { margin-top: 2px; }
.tray { display: flex; margin-left: auto; }
.clock { width: 64px; display: flex; flex-direction: column; align-items: center; line-height: 14px; font-size: 12.800px; padding-top: 1px; }
.clock b { font-weight: 400; font-size: 16px; line-height: 16px; }
.desk { margin: 0 12px 0 15px; }

.qemu-head { height: 58px; flex: none; background: linear-gradient(#bcbec0, #dddfe1 4px, #dee0e2); color: #232629; }
.qtitle { height: 28px; display: flex; align-items: center; padding: 0 9px 0 4px; }
.qicon { margin-right: 8px; }
.qtitle h1 { flex: 1; text-align: center; font-size: 13.300px; padding-left: 25px; }
.qmenu { display: flex; gap: 20px; padding: 6px 10px; line-height: 20px; font-size: 12.800px; letter-spacing: -.15px; }

.guest { position: relative; width: 1360px; height: 708px; margin-left: 40px; background: #f6f5f4; font: 13px "DejaVu Sans", sans-serif; color: #2e3436; overflow: hidden; display: flex; flex-direction: column; }
.guest span { white-space: nowrap; }
.xpanel { height: 27px; flex: none; background: #333; border-bottom: 1px solid #202020; display: flex; align-items: center; color: #e6e6e6; padding-left: 3px; }
.apps { width: 80px; margin-left: 2px; }
.grip { width: 4px; height: 10px; margin: 0 2px 0 4px; background: repeating-linear-gradient(#8a8a8a 0 1px, transparent 1px 4px); }
.xtask { width: 200px; height: 25px; border-radius: 5px; background: #1d1d1d; display: flex; align-items: center; padding-left: 5px; }
.xtask span { margin-left: 10px; }
.spaces { display: flex; margin-left: auto; height: 26px; }
.spaces i { width: 46px; background: #262626; border-right: 1px solid #323232; }
.spaces .on { height: 25px; margin-top: 1px; display: flex; align-items: center; justify-content: center; background: #6a6a6a; border: 1px solid #eee; }
.vol { margin-left: 14px; }
.pwr { margin-left: 11px; }
.date { margin-left: 14px; width: 118px; letter-spacing: -.18px; }
.user { margin-left: 11px; width: 66px; }

.wtitle { height: 24px; flex: none; background: linear-gradient(#b2b0ac, #d8d5d1); display: flex; align-items: center; padding: 0 5px 0 2px; }
.wtitle h2 { flex: 1; text-align: center; font-weight: bold; font-size: 12.200px; margin: 0 2px 2px 0; line-height: 20px; letter-spacing: -.13px; }
.menu { height: 24px; flex: none; display: flex; gap: 16px; align-items: center; padding-left: 8.500px; letter-spacing: .09px; }
.menu svg { margin-left: auto; margin-right: 12px; }

.bar { height: 32px; flex: none; display: flex; }
.bar1 { margin-top: 3px; padding-left: 3px; position: relative; }
.bar1::before { content: ""; position: absolute; left: 0; top: -4px; width: 1336px; height: 1px; background: #dcdad8; }
.bar2 { margin-top: 7px; padding-left: 4px; }
.b { width: 33px; height: 32px; flex: none; font-family: "Noto Sans"; }
.d { width: 11px; height: 32px; background: #000; clip-path: polygon(2px 16px, 9px 16px, 5.500px 20px); }
.d.off { background: #b3b3b1; }
.s { width: 8px; height: 32px; background: linear-gradient(#d8d6d3, #d8d6d3) 4px 0 / 1px 32px no-repeat; }
.g1 { margin-left: 1px; }
.m1 { margin-left: -1px; }
.k { stroke: #3a3a38; fill: none; }
.u { stroke: #1e8bcd; fill: none; stroke-width: 1.200; }
.pressed { background: #d6d1cd; border-radius: 4px; outline: 1px solid #cdc7c2; outline-offset: -1px; }
.t { display: flex; align-items: center; justify-content: center; font-size: 19px; color: #3a3a38; }
.bold { font-weight: bold; padding-right: 1px; }
.ital { font-family: "Liberation Serif"; font-style: italic; font-size: 21px; }
.und { text-decoration: underline #1e8bcd 1px; text-underline-offset: 3px; }
.more { width: 26px; }
.open { display: flex; width: 44px; height: 35px; flex: none; background: linear-gradient(#b3afab, #b3afab) 1px 0 / 43px 1px no-repeat, linear-gradient(#b3afab, #b3afab) 1px 0 / 1px 35px no-repeat, linear-gradient(#b3afab, #b3afab) 43px 0 / 1px 35px no-repeat; margin-top: -1px; padding-top: 1px; }

.combo { height: 34px; margin-top: -1px; flex: none; border: 1px solid #cdc7c2; border-radius: 5px; background: #fff; display: flex; align-items: center; color: #000; overflow: hidden; letter-spacing: -.1px; }
.combo span { flex: 1; padding: 0 0 2px 8px; }
.combo i { width: 34px; height: 32px; border-left: 1px solid #cdc7c2; background: linear-gradient(#f8f7f6, #ebe9e7); }
.combo i::after, .palette-name i { content: ""; display: block; width: 12px; border: 6px solid transparent; border-top-color: #2e3436; border-bottom: 0; margin: 13px 0 0 11px; }
.font { width: 206px; }
.size { width: 100px; margin: -1px 1px 0 9px; }
.name { width: 161px; margin: 0; }
.name span { padding-bottom: 0; }

.lower { flex: 1; display: flex; min-height: 0; }
.doc { width: 1301px; flex: none; display: flex; flex-direction: column; margin-top: 4px; }
.formula { height: 35px; margin: 1px 0 0 4px; display: flex; align-items: center; flex: none; }
.fx { font: italic 21px "Liberation Serif", serif; color: #1e8bcd; letter-spacing: 0; }
.fx sub { font-size: 20px; vertical-align: -3px; line-height: 1; }
.formula .fx { width: 21px; margin: 0 5px 2px 5px; }
.formula .fx sub { font-size: 18px; }
.formula .s { margin-left: 2px; }
.formula > svg { margin-left: -1px; }
.formula > .ok { margin-left: 10px; }
.input { margin-left: 15px; width: 1019px; height: 22px; border: 1px solid #c0bdba; background: #fff; }
.drop { border: 6px solid transparent; border-top-color: #2e3436; border-bottom: 0; margin-left: 3px; }
.gridwrap { flex: 1; display: flex; margin-top: 3px; min-height: 0; overflow: hidden; }
.sheet { width: 1287px; overflow: hidden; background: #fff; }
.row { display: flex; height: 17px; width: 1353px; }
.row.tall { height: 31px; }
.cell { width: 82px; flex: none; border-right: 1px solid #c0c0c0; border-bottom: 1px solid #c0c0c0; font: 13px "Liberation Sans"; letter-spacing: -.2px; color: #000; padding-left: 1px; line-height: 17px; }
.hd { width: 41px; flex: none; background: #f6f5f4; border-right: 1px solid #8f8f8f; border-bottom: 1px solid #8f8f8f; display: flex; align-items: center; justify-content: center; line-height: 15px; }
.row.top { height: 18px; }
.top .hd { width: 82px; padding-left: 2px; }
.top .hd:first-child { width: 41px; }
.hd.on { background: #3584e4; color: #fff; font-weight: bold; border-color: #2f74c8; }
.cell.cursor { position: relative; }
.cell.cursor::before { content: ""; position: absolute; left: -1px; top: -1px; width: 83px; height: 18px; border: 2px solid #3d80d8; }
.cell.cursor::after { content: ""; position: absolute; right: -4px; bottom: -3px; width: 5px; height: 5px; background: #3d80d8; z-index: 1; }
.scroll { width: 14px; background: #cdcdcd; display: flex; flex-direction: column; align-items: center; }
.split { width: 14px; height: 5px; background: linear-gradient(#000, #000) 3px 2px / 8px 1px no-repeat #a8a8a8; }
.thumb { width: 8px; height: 191px; border-radius: 4px; background: #7e8181; margin-top: 107px; }

.side { position: relative; flex: 1; margin-top: 4px; border-left: 1px solid #b5b2af; display: flex; flex-direction: column; align-items: center; gap: 8px; padding: 3px 0 0 2px; }
.side .sel { background: #d6d1cd; border-radius: 4px; margin-top: 3px; }
.fx.big { font-size: 25px; height: 34px; line-height: 30px; padding: 1px 0 0 2px; }
.fx.big sub { font-size: 24px; }
.handle { position: absolute; left: -1px; top: 260px; }

.popup { position: absolute; left: 446px; top: 150px; width: 206px; height: 329px; background: linear-gradient(#b3afab, #b3afab) 42px 0 / 163px 1px no-repeat, #f6f5f4; border: 1px solid #b3afab; border-top: 0; padding: 0 5px; }
.popup h3 { font-weight: bold; font-size: 13px; line-height: 21px; margin-left: -2px; letter-spacing: -.05px; }
.auto { height: 30px; margin: 5px 2px 0; border: 1px dotted #999; border-radius: 3px; display: flex; align-items: center; padding-left: 7px; gap: 2px; }
.auto span { margin-top: -1px; }
.palette-name { height: 34px; margin-top: 3px; border: 1px solid #cdc7c2; border-radius: 5px; background: linear-gradient(#f8f7f6, #ebe9e7); display: flex; align-items: center; justify-content: space-between; padding: 0 11px; }
.palette-name i { margin: 0; }
.swatches { display: grid; grid-template-columns: repeat(12, 12px); gap: 4px; padding: 2px; height: 162px; border: 1px solid #cdc7c2; align-content: start; }
.swatches i { height: 12px; }
.swatches .pick { box-shadow: 0 0 0 1px #fff, 0 0 0 2px #8ab2e0, inset 0 0 0 1px #2d5a86; }
.recent { line-height: 19px; height: 34px; border-bottom: 1px solid #d8d6d3; }
.custom { height: 32px; display: flex; align-items: center; padding-left: 10px; gap: 8px; letter-spacing: .1px; }
.tip { position: absolute; left: 449px; top: 271px; width: 104px; height: 42px; border-radius: 4px; background: rgba(18, 18, 18, .87); color: #fff; padding: 1px 0 0 13px; line-height: 42px; white-space: nowrap; }
```

FILE: app.js
```js
const sheet = document.getElementById('sheet');
const columns = 'ABCDEFGHIJKLMNO'.split('').concat('');

function add(parent, cls, text) {
  const el = document.createElement('div');
  el.className = cls;
  el.textContent = text;
  parent.append(el);
  return el;
}

const header = add(sheet, 'row top', '');
add(header, 'hd', '');
columns.forEach(c => add(header, c === 'D' ? 'hd on' : 'hd', c));

for (let n = 16; n <= 44; n++) {
  const row = add(sheet, n === 23 ? 'row tall' : 'row', '');
  add(row, n === 24 ? 'hd on' : 'hd', n);
  columns.forEach(c => {
    const ref = c + n;
    add(row, ref === 'D24' ? 'cell cursor' : 'cell', ref === 'D21' ? 'H20' : '');
  });
}

const palette = [
  '000000 111111 1c1c1c 333333 666666 808080 999999 b2b2b2 cccccc dddddd eeeeee ffffff',
  'ffff00 ffbf00 ff8000 ff4000 ff0000 bf0041 800080 55308d 2a6099 158466 00a933 81d41a',
  'ffffd7 fff5ce ffdbb6 ffd8ce ffd7d7 f7d1d5 e0c2cd dedce6 dee6ef dee7e5 dde8cb f6f9d4',
  'ffffa6 ffe994 ffb66c ffaa95 ffa6a6 ec9ba4 bf819e b7b3ca b4c7dc b3cac7 afd095 e8f2a1',
  'ffff6d ffde59 ff972f ff7b59 ff6d6d e16173 a1467e 8e86ae 729fcf 81aca6 77bc65 d4ea6b',
  'ffff38 ffd428 ff860d ff5429 ff3838 d62e4e 8d1d75 6b5e9b 5983b0 50938a 3faf46 bbe33d',
  'e6e905 e8a202 ea7500 ed4c05 f10d0c a7074b 780373 5b277d 3465a4 168253 069a2e 5eb91e',
  'acb20c b47804 b85c00 be480a c9211e 861141 650953 55215b 355269 1e6a39 127622 468a1a',
  '706e0c 784b04 7b3d00 813709 8d281e 611729 4e102d 481d32 383d3c 28471f 224b12 395511',
  '443205 472702 492300 4b2204 50200c 41190d 3b160e 3a1a0f 362413 302709 2b2a08 342a06'
].join(' ').split(' ');
const box = document.getElementById('swatches');
palette.forEach((hex, n) => {
  const s = document.createElement('i');
  s.style.background = '#' + hex;
  if (n === 2) s.className = 'pick';
  box.append(s);
});
```
